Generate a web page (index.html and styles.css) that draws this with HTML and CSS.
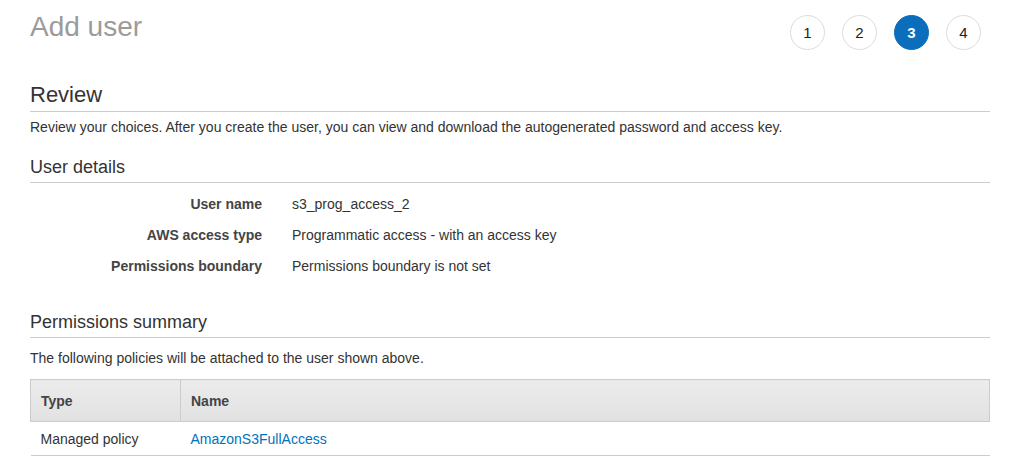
FILE: index.html
```html
<!DOCTYPE html>
<html>
<head>
<meta charset="utf-8">
<link rel="stylesheet" href="styles.css">
</head>
<body>
<div class="page">
  <header class="top">
    <h1 class="title">Add user</h1>
    <ol class="steps">
      <li class="step">1</li>
      <li class="step">2</li>
      <li class="step active">3</li>
      <li class="step">4</li>
    </ol>
  </header>

  <h2 class="section-title">Review</h2>
  <p class="intro">Review your choices. After you create the user, you can view and download the autogenerated password and access key.</p>

  <h3 class="sub-title">User details</h3>
  <div class="details">
    <div class="row"><div class="label">User name</div><div class="value">s3_prog_access_2</div></div>
    <div class="row"><div class="label">AWS access type</div><div class="value">Programmatic access - with an access key</div></div>
    <div class="row"><div class="label">Permissions boundary</div><div class="value">Permissions boundary is not set</div></div>
  </div>

  <h3 class="sub-title perms">Permissions summary</h3>
  <p class="note">The following policies will be attached to the user shown above.</p>

  <table class="policies">
    <thead>
      <tr><th class="col-type">Type</th><th>Name</th></tr>
    </thead>
    <tbody>
      <tr><td>Managed policy</td><td><a class="link" href="#">AmazonS3FullAccess</a></td></tr>
    </tbody>
  </table>
</div>
</body>
</html>
```

FILE: styles.css
```css
html, body {
  margin: 0;
  padding: 0;
  background: #fff;
}
body {
  font-family: "Liberation Sans", Arial, Helvetica, sans-serif;
  color: #333;
  font-size: 14px;
}
.page {
  padding: 0 19px 0 30px;
}
.top {
  display: flex;
  justify-content: space-between;
  align-items: flex-start;
  padding-right: 9px;
  height: 50px;
}
.title {
  margin: 10px 0 0 0;
  font-size: 28px;
  line-height: 34px;
  font-weight: normal;
  color: #9b9b9b;
}
.steps {
  list-style: none;
  margin: 15px 0 0 0;
  padding: 0;
  display: flex;
  gap: 17px;
}
.step {
  width: 33px;
  height: 33px;
  border: 1px solid #dcdcdc;
  border-radius: 50%;
  display: flex;
  align-items: center;
  justify-content: center;
  font-size: 15px;
  color: #222;
}
.step.active {
  background: #0a6ebd;
  border-color: #0a6ebd;
  color: #fff;
  font-weight: bold;
}
.section-title {
  margin: 32px 0 0 0;
  font-size: 22px;
  line-height: 26px;
  font-weight: normal;
  color: #333;
  padding-bottom: 3px;
  border-bottom: 1px solid #ccc;
}
.intro {
  margin: 7px 0 0 0;
  line-height: 16px;
}
.sub-title {
  margin: 21px 0 0 0;
  font-size: 18px;
  line-height: 22px;
  font-weight: normal;
  color: #333;
  padding-bottom: 4px;
  border-bottom: 1px solid #ccc;
}
.details {
  padding-top: 5px;
}
.row {
  display: grid;
  grid-template-columns: 232px 1fr;
  column-gap: 30px;
  padding: 7.5px 0;
  line-height: 16px;
}
.label {
  text-align: right;
  font-weight: bold;
  color: #444;
}
.value {
  color: #333;
}
.sub-title.perms {
  margin-top: 30px;
}
.note {
  margin: 12px 0 0 0;
  line-height: 16px;
}
.policies {
  margin-top: 13px;
  width: 100%;
  border-collapse: collapse;
}
.policies th {
  text-align: left;
  font-weight: bold;
  color: #444;
  height: 41px;
  padding: 0 10px;
  background: linear-gradient(#ececec, #e1e1e1);
  border: 1px solid #ccc;
}
.policies th.col-type {
  width: 129px;
}
.policies td {
  height: 33px;
  padding: 0 10px;
  border-bottom: 1px solid #ccc;
  color: #333;
}
.link {
  color: #0073bb;
  text-decoration: none;
}
```
